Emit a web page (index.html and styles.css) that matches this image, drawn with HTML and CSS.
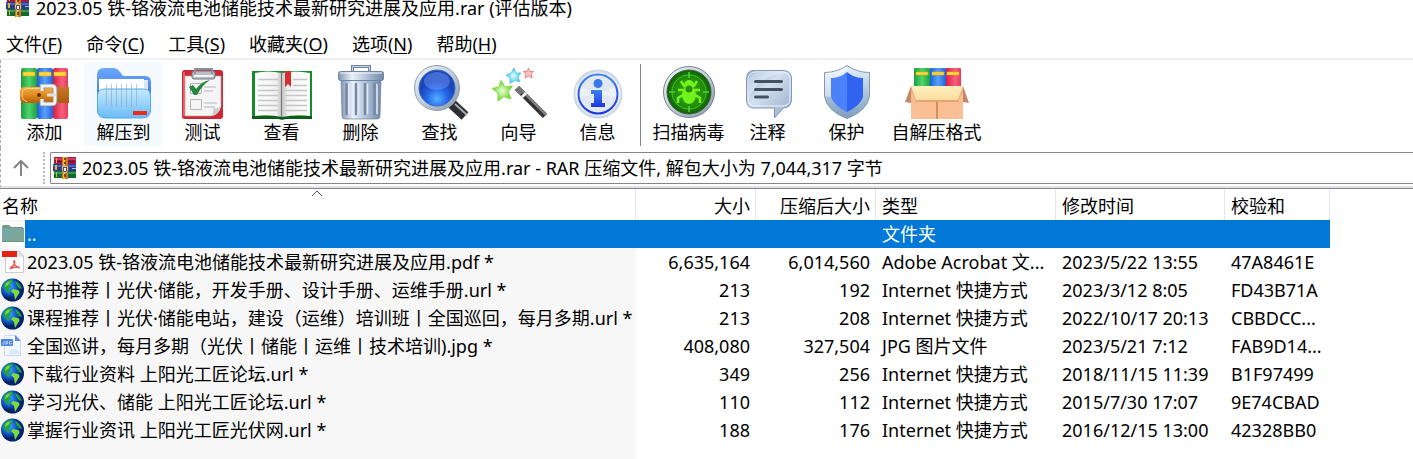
FILE: index.html
```html
<!DOCTYPE html>
<html lang="zh-CN">
<head>
<meta charset="utf-8">
<title>2023.05 铁-铬液流电池储能技术最新研究进展及应用.rar (评估版本)</title>
<link rel="stylesheet" href="styles.css">
</head>
<body>
<svg class="sprite" aria-hidden="true">
  <defs>
    <linearGradient id="gGreen"><stop offset="0" stop-color="#1d9c3e"/><stop offset=".5" stop-color="#4fd46a"/><stop offset="1" stop-color="#1f9f3e"/></linearGradient>
    <linearGradient id="gBlue"><stop offset="0" stop-color="#1c5fd6"/><stop offset=".5" stop-color="#5aa0fb"/><stop offset="1" stop-color="#1f62dc"/></linearGradient>
    <linearGradient id="gRed"><stop offset="0" stop-color="#d81c40"/><stop offset=".6" stop-color="#f8607c"/><stop offset="1" stop-color="#e43a59"/></linearGradient>
    <linearGradient id="gBelt" x2="0" y2="1"><stop offset="0" stop-color="#f7b04a"/><stop offset=".5" stop-color="#e08a1c"/><stop offset="1" stop-color="#b25e0c"/></linearGradient>
    <linearGradient id="gBack" x2="0" y2="1"><stop offset="0" stop-color="#6ba8fb"/><stop offset="1" stop-color="#2358d8"/></linearGradient>
    <linearGradient id="gFront" x2="0" y2="1"><stop offset="0" stop-color="#c4e9fe"/><stop offset="1" stop-color="#6bbcf7"/></linearGradient>
    <linearGradient id="gPage"><stop offset="0" stop-color="#fff"/><stop offset=".8" stop-color="#f1f1f1"/><stop offset="1" stop-color="#b8b8b8"/></linearGradient>
    <linearGradient id="gPageR"><stop offset="0" stop-color="#c2c2c2"/><stop offset=".2" stop-color="#f1f1f1"/><stop offset="1" stop-color="#fff"/></linearGradient>
    <linearGradient id="gBin"><stop offset="0" stop-color="#8296b2"/><stop offset=".3" stop-color="#e9f0f8"/><stop offset=".6" stop-color="#b5c6db"/><stop offset="1" stop-color="#7188a8"/></linearGradient>
    <linearGradient id="gSilver" x2="1" y2="1"><stop offset="0" stop-color="#f4f8fc"/><stop offset=".5" stop-color="#c3cedc"/><stop offset="1" stop-color="#8895a8"/></linearGradient>
    <radialGradient id="gLens" cy=".8"><stop offset="0" stop-color="#4fb0ff"/><stop offset=".6" stop-color="#2563e6"/><stop offset="1" stop-color="#1c45b8"/></radialGradient>
    <linearGradient id="gInfo" x2="0" y2="1"><stop offset="0" stop-color="#3b83f2"/><stop offset="1" stop-color="#1f35dc"/></linearGradient>
    <radialGradient id="gScan"><stop offset="0" stop-color="#3fae16"/><stop offset=".7" stop-color="#208a0a"/><stop offset="1" stop-color="#0d5e05"/></radialGradient>
    <linearGradient id="gBubble" x2="1" y2="1"><stop offset="0" stop-color="#8fa9ca"/><stop offset=".4" stop-color="#d3e0f0"/><stop offset="1" stop-color="#93a9c8"/></linearGradient>
    <linearGradient id="gShield" x2="0" y2="1"><stop offset="0" stop-color="#e5f1fb"/><stop offset="1" stop-color="#7d9cbd"/></linearGradient>
    <linearGradient id="gBox" x2="0" y2="1"><stop offset="0" stop-color="#e79a68"/><stop offset=".3" stop-color="#f8bd90"/><stop offset="1" stop-color="#fcc096"/></linearGradient>
    <linearGradient id="gLid" x2="0" y2="1"><stop offset="0" stop-color="#fff0bb"/><stop offset="1" stop-color="#fbdda0"/></linearGradient>
    <radialGradient id="gSea" cx=".35" cy=".35"><stop offset="0" stop-color="#46a8fa"/><stop offset=".6" stop-color="#1260d2"/><stop offset="1" stop-color="#05246e"/></radialGradient>
    <linearGradient id="gFolder" x2="1" y2="1"><stop offset="0" stop-color="#72a9ad"/><stop offset="1" stop-color="#83a58d"/></linearGradient>
    <radialGradient id="gStar"><stop offset="0" stop-color="#efffdc"/><stop offset="1" stop-color="#69d51f"/></radialGradient>
    <radialGradient id="gStarB"><stop offset="0" stop-color="#e8fbff"/><stop offset="1" stop-color="#3fc6ec"/></radialGradient>
  </defs>

  <symbol id="archive" viewBox="0 0 24 22">
    <path fill="#9f1c45" d="M1 0h22v7H1z"/><path fill="#d63561" d="M1 1h22v2H1z"/>
    <path fill="#283a8f" d="M0 7h23v7H0z"/><path fill="#4b67c8" d="M0 8h23v2H0z"/>
    <path fill="#15692f" d="M1 14h22v7H1z"/><path fill="#2ea052" d="M1 15h22v2H1z"/>
    <path fill="#5b1230" d="M2 4h20v1H2z"/><path fill="#b9c2e8" d="M19 11h4v1h-4z"/>
    <path fill="#e8b32a" d="M3 1h1v5H3zM2 8h2v5H2zM3 15h1v5H3z"/>
    <path fill="#c87a1c" d="M9 0h6v22H9z"/><path fill="#f0b548" d="M10 0h2v22h-2z"/>
    <path fill="#7b4310" d="M11 1h2v2h-2zM11 5h2v2h-2zM11 17h2v3h-2z"/>
    <path fill="#6b4a35" d="M8 9h8v4l-2 3h-4l-2-3z"/><path fill="none" stroke="#c9c4c0" d="M9.500 9.500h5v4l-1 2h-3l-1-2z"/><path fill="#fff" d="M11 11h2v3h-2z"/>
  </symbol>

  <symbol id="i-add" viewBox="0 0 64 56">
    <rect x="8" y="4" width="16" height="51" rx="2" fill="url(#gGreen)"/><rect x="24" y="4" width="16" height="51" rx="2" fill="url(#gBlue)"/><rect x="40" y="4" width="15" height="51" rx="2" fill="url(#gRed)"/>
    <path fill="#ffd93b" stroke="#d9a81b" stroke-width=".6" d="M10 8h12v4H10zM26 8h12v4H26zM41 8h12v4H41z"/>
    <path fill="url(#gBelt)" d="M12 23h44v16H12q-4 0-5-4v-8q1-4 5-4z"/>
    <path fill="#a85a12" opacity=".65" d="M44 23h12v16H44z"/><path stroke="#ffd287" fill="none" d="M14 24.500q-5 1-5 6.500t5 6.500M13 24.500h14"/>
    <circle cx="26" cy="31" r="2" fill="#633607"/>
    <path fill="none" stroke="#8e9299" stroke-width="4.500" d="M29 27v-5h10q3 0 3 3v12q0 3-3 3H29v-5"/><path fill="none" stroke="#f0f2f5" stroke-width="3" d="M29 27v-5h10q3 0 3 3v12q0 3-3 3H29v-5"/>
    <path stroke="#dfe2e7" stroke-width="3" d="M34 31h9"/>
  </symbol>

  <symbol id="i-extract" viewBox="0 0 64 56">
    <path fill="url(#gBack)" d="M5 11q0-7 7-7h9q4 0 7 4l3 4h22q6 0 6 6v26q0 10-9 10H14q-9 0-9-9z"/>
    <path fill="#dbe7f5" d="M9 16h47v26H9z"/><path fill="#fff" d="M7 15h45v26H7z"/>
    <path fill="url(#gFront)" stroke="#52a9ef" d="M5.500 32q0-7 7-7h39q7 0 7 7v13q0 9-9 9H14q-8.500 0-8.500-9z"/>
    <path stroke="#8ca7ba" stroke-width="1" opacity=".6" d="M14.500 21v21M19.500 20v23M24.500 20v23M29.500 20v23M34.500 20v23M39.500 20v23M44.500 20v22"/>
    <path fill="#e92d16" d="M41 47h14v4H41z"/>
  </symbol>

  <symbol id="i-test" viewBox="0 0 64 56">
    <rect x="11" y="6" width="41" height="49" rx="3" fill="#cf2632"/><path fill="#ec5d63" d="M12 8h2v44h-2z"/>
    <path fill="#f5f5f5" stroke="#aaa" stroke-width=".7" d="M14 12h36v30q-2 9-10 10H14z"/><path fill="#cfcfcf" d="M50 42q-2 9-10 10 3-3 2-8 5 1 8-2z"/>
    <rect x="21" y="7" width="23" height="8" rx="2" fill="#b9bec4" stroke="#737a82"/><path fill="none" stroke="#8a9199" stroke-width="2" d="M24 10V5h17v5"/><path fill="#f4f4f4" d="M23 11h19v2H23z"/>
    <path fill="none" stroke="#b5b5b5" d="M19.500 19.500h11v10h-11zM19.500 35.500h11v10h-11z"/>
    <path stroke="#b6b6b6" stroke-width="1.200" d="M33 23h12M33 27h9M33 39h13M33 43h11"/>
    <path fill="#24863d" d="M18 23l4-2 3 4q6-8 14-9-8 5-13 15h-3z"/>
  </symbol>

  <symbol id="i-view" viewBox="0 0 64 56">
    <path fill="#168b2b" d="M2 7h60v48H36l-4 1-4-1H2z"/><path fill="#0d5c1c" d="M2 52h60v3H2z"/>
    <path fill="url(#gPage)" d="M5 9q13-3 27 0v44q-13-3-27-1z"/><path fill="url(#gPageR)" d="M32 9q13-3 28 0v43q-14-2-28 1z"/>
    <path stroke="#c5c5c5" stroke-width="1.300" d="M8 15.500h20M8 21.500h20M8 26.500h20M8 31.500h20M8 36.500h20M8 41.500h20M8 46.500h20M43 15.500h14M43 21.500h14M35 26.500h22M35 31.500h22M35 36.500h22M35 41.500h22M35 46.500h22"/>
    <path stroke="#777" d="M31.500 8v45"/><path fill="#d82b2e" d="M35 7h6v16l-3-3-3 3z"/>
  </symbol>

  <symbol id="i-delete" viewBox="0 0 64 56">
    <path fill="none" stroke="#6f839e" stroke-width="3" d="M23.500 8V2.500h17V8"/><path fill="none" stroke="#c6d4e5" d="M23.500 8V2.500h17V8"/>
    <path fill="url(#gBin)" stroke="#6e819c" stroke-width=".7" d="M12 15h40l-1 37q0 3-3 3H16q-3 0-3-3z"/>
    <path stroke="#7589a4" stroke-width="2.500" stroke-linecap="round" d="M17.500 20v30M27 20v30M36 20v30M45.500 20v30"/><path stroke="#e2ebf5" stroke-width="1.500" d="M20 20v30M29.500 20v30M38.500 20v30M48 20v30"/>
    <rect x="9.500" y="7.500" width="45" height="9" rx="2" fill="url(#gBin)" stroke="#7186a3"/><path stroke="#f2f7fc" stroke-width="1" d="M11 9h42"/>
  </symbol>

  <symbol id="i-find" viewBox="0 0 64 56">
    <path stroke="#b7bdc5" stroke-width="7" d="M41 37l5 5"/><path stroke="#2c2e31" stroke-width="10" d="M44 40l13 12"/><path stroke="#a9adb2" stroke-width="2" d="M47 40l12 11"/>
    <circle cx="29" cy="24" r="22.500" fill="url(#gSilver)" stroke="#8d9bad"/><circle cx="29" cy="24" r="18" fill="url(#gLens)" stroke="#3a6fc2"/>
    <ellipse cx="29" cy="17" rx="13" ry="9" fill="#7fa8ff" opacity=".4"/>
  </symbol>

  <symbol id="i-wizard" viewBox="0 0 64 56">
    <path stroke="#333" stroke-width="6" d="M30 24l28 28"/><path stroke="#858585" stroke-width="2" d="M31 23l28 28"/><path stroke="#777" stroke-width="6" d="M30 24l5 5"/><path stroke="#f4f4f4" stroke-width="6" d="M36 30l2 2"/>
    <path fill="url(#gStar)" stroke="#7bdc3a" d="M14 16.500l4 6.500 7.500-1-4.500 6 3 7-7-2.500-6 4.500V29l-6-4.500 7-1.500z"/>
    <path fill="url(#gStarB)" stroke="#62cdea" d="M27 4l2 5h5l-3 4 2 5-5-1.500-5 3v-5.500l-4-3 5-2z"/>
    <path fill="#ffc0c0" stroke="#ee8585" d="M41.500 4l1.500 3.500h3.500L44 10l1 4-3.500-2L38 14l1-4-3-2.500h4z"/>
  </symbol>

  <symbol id="i-info" viewBox="0 0 64 56">
    <circle cx="32" cy="30" r="24.500" fill="#ccd7e5"/><circle cx="32" cy="30" r="22.500" fill="#e1e8f0"/><path fill="#fff" opacity=".4" d="M32 30L10 20l-1 14zM32 30l22-10 1 14z"/>
    <circle cx="32" cy="30" r="19.500" fill="none" stroke="url(#gInfo)" stroke-width="2"/>
    <circle cx="32" cy="19.500" r="4.500" fill="#3b79e9"/><path fill="url(#gInfo)" d="M25 26h11v13h3v4H25v-4h3v-9h-3z"/>
  </symbol>

  <symbol id="i-scan" viewBox="0 0 64 56">
    <circle cx="32" cy="28" r="25.500" fill="url(#gSilver)" stroke="#748190"/><circle cx="32" cy="28" r="22" fill="url(#gScan)" stroke="#39602f"/>
    <circle cx="32" cy="28" r="17" fill="none" stroke="#47c32a"/><path stroke="#52d330" stroke-width="1.500" d="M32 8v6M32 42v6M12 28h6M46 28h6"/>
    <path fill="none" stroke="#71f31b" stroke-width="2.500" d="M24 17l3 5h10l3-5M21 26h6M37 26h6M21 39v-5l5-3M43 39v-5l-5-3"/>
    <circle cx="32" cy="21" r="5" fill="#71f31b"/><ellipse cx="32" cy="31" rx="7" ry="9" fill="#71f31b"/><circle cx="32" cy="25" r="3.500" fill="#2a8c13"/>
  </symbol>

  <symbol id="i-comment" viewBox="0 0 64 56">
    <path fill="url(#gBubble)" stroke="#7f97b8" d="M18 6.500h29q8.500 0 8.500 8.500v20q0 8.500-8 9L38.500 54V44H18q-7.500 0-7.500-8V15q0-8.500 7.500-8.500z"/>
    <path fill="#fff" opacity=".35" d="M13 34V17q0-8 8-8h27Q22 12 13 34z"/><rect x="12" y="8" width="42" height="34" rx="7" fill="none" stroke="#f0f6fd"/>
    <path stroke="#445064" stroke-width="3" stroke-linecap="round" d="M19.500 17.500h26M19.500 25.500h26M19.500 33h12"/>
  </symbol>

  <symbol id="i-protect" viewBox="0 0 64 56">
    <path fill="url(#gShield)" stroke="#8398af" d="M32 1.500q-10 7-22.500 7v24Q12 47 32 54.500 52 47 54.500 32.500v-24Q42 8.500 32 1.500z"/>
    <path fill="#fff" opacity=".45" d="M32 2q-10 7-22 7v23l6 1V14q8 0 16-5z"/>
    <path fill="#4b81fb" d="M32 8q-7 6-16 6v19q3 9 16 15z"/><path fill="#2f63f0" d="M32 8q7 6 16 6v19q-3 9-16 15z"/>
  </symbol>

  <symbol id="i-sfx" viewBox="0 0 64 56">
    <rect x="9" y="4" width="16" height="22" rx="1" fill="url(#gGreen)"/><rect x="25" y="4" width="16" height="22" rx="1" fill="url(#gBlue)"/><rect x="41" y="4" width="15" height="22" rx="1" fill="url(#gRed)"/>
    <path fill="#ffd93b" stroke="#d9a81b" stroke-width=".6" d="M11 8h12v3H11zM27 8h12v3H27zM42 8h12v3H42z"/>
    <path fill="#c48869" d="M6 22L0 38l6 1zM58 22l6 17-6-1z"/><path fill="url(#gBox)" d="M6 22h52v33H6z"/><path stroke="#d2905f" stroke-width="2" d="M32 37v18"/>
    <path fill="#e8a373" d="M6 23l5 15h42l5-15z"/><path fill="url(#gLid)" d="M6 22h52l-5 14H11z"/>
  </symbol>

  <symbol id="f-folder" viewBox="0 0 25 24">
    <path fill="#fcfcfc" d="M1 0h24v24H1z"/><path fill="#759a78" d="M2 5l1-2h6l2 2h12v4H2z"/><path fill="url(#gFolder)" d="M2 6h22v14H2z"/><path fill="#6c958e" d="M2 19h22v1H2z"/>
  </symbol>
  <symbol id="f-pdf" viewBox="0 0 25 24">
    <path fill="#fff" stroke="#ccc" d="M5.500 1.500H19l4.500 4.500v16.500h-18z"/><path fill="#eee" stroke="#ccc" d="M19 1.500V6h4.500z"/><path fill="#e12413" d="M2 1h15v6H2z"/>
    <path fill="none" stroke="#ed5147" stroke-width="1.300" d="M14 10q-1 6 6 8-5-2-10 1 4-2 5-8M10 19q1-3 4-4"/>
  </symbol>
  <symbol id="f-url" viewBox="0 0 25 24">
    <circle cx="12.500" cy="12" r="11.500" fill="url(#gSea)"/><path fill="#22a63a" d="M4 6q4-5 9-4l-1 3-3 1 2 3-3 2 2 2-1 2q-3-1-4-4L3 10zM15 3q5 2 7 8l-3-1-3-4z"/>
    <path fill="#7ddb3c" d="M13 11l5 1q3 2 0 5l-3 5-1-6-3-3zM6 5l5-2-3 4-3 2z"/>
  </symbol>
  <symbol id="f-jpg" viewBox="0 0 25 24">
    <path fill="#f2f6ff" stroke="#ccdafa" d="M4.500 1.500h12l4 5v15h-16z"/><path fill="#5d8fe6" d="M15 1l6 6h-6z"/><path fill="#dbe6fb" d="M9 20q1-5 5-5t6 5z"/><rect x="1" y="5" width="12" height="7" rx="1" fill="#4c86e2"/><path fill="none" stroke="#b4cdf5" stroke-width="1" d="M4 7v3H2.500M6 11V7.500h1.500v2H6M11.500 7.500H9.500V10h2V9"/>
  </symbol>
</svg>

<header class="titlebar"><svg class="archive"><use href="#archive"/></svg><span>2023.05 铁-铬液流电池储能技术最新研究进展及应用.rar (评估版本)</span></header>

<nav class="menu">
  <button>文件(<u>F</u>)</button><button>命令(<u>C</u>)</button><button>工具(<u>S</u>)</button><button>收藏夹(<u>O</u>)</button><button>选项(<u>N</u>)</button><button>帮助(<u>H</u>)</button>
</nav>

<div class="toolbar">
  <button class="tool"><svg><use href="#i-add"/></svg>添加</button>
  <button class="tool tool-active"><svg><use href="#i-extract"/></svg>解压到</button>
  <button class="tool"><svg><use href="#i-test"/></svg>测试</button>
  <button class="tool"><svg><use href="#i-view"/></svg>查看</button>
  <button class="tool"><svg><use href="#i-delete"/></svg>删除</button>
  <button class="tool"><svg><use href="#i-find"/></svg>查找</button>
  <button class="tool"><svg><use href="#i-wizard"/></svg>向导</button>
  <button class="tool"><svg><use href="#i-info"/></svg>信息</button>
  <span class="separator"></span>
  <button class="tool"><svg><use href="#i-scan"/></svg>扫描病毒</button>
  <button class="tool"><svg><use href="#i-comment"/></svg>注释</button>
  <button class="tool"><svg><use href="#i-protect"/></svg>保护</button>
  <button class="tool tool-wide"><svg><use href="#i-sfx"/></svg>自解压格式</button>
</div>

<div class="location">
  <button class="up" aria-label="向上"><svg viewBox="0 0 18 18"><path d="M9 17V2M2 9l7-7 7 7"/></svg></button>
  <div class="address">
    <svg class="archive"><use href="#archive"/></svg>
    <input aria-label="路径" readonly value="2023.05 铁-铬液流电池储能技术最新研究进展及应用.rar - RAR 压缩文件, 解包大小为 7,044,317 字节">
  </div>
</div>

<main class="list">
  <table>
    <colgroup><col class="c-name"><col class="c-size"><col class="c-size"><col class="c-type"><col class="c-time"><col class="c-sum"></colgroup>
    <thead><tr>
      <th>名称<svg class="sort" viewBox="0 0 12 7"><path d="M1 6l5-5 5 5"/></svg></th><th class="num">大小</th><th class="num">压缩后大小</th><th>类型</th><th>修改时间</th><th>校验和</th>
    </tr></thead>
    <tbody>
      <tr class="selected"><td><div class="name"><svg><use href="#f-folder"/></svg><span>..</span></div></td><td></td><td></td><td>文件夹</td><td></td><td></td></tr>
      <tr><td><div class="name"><svg><use href="#f-pdf"/></svg><span>2023.05 铁-铬液流电池储能技术最新研究进展及应用.pdf *</span></div></td><td class="num">6,635,164</td><td class="num">6,014,560</td><td>Adobe Acrobat 文...</td><td>2023/5/22 13:55</td><td>47A8461E</td></tr>
      <tr><td><div class="name"><svg><use href="#f-url"/></svg><span>好书推荐丨光伏·储能，开发手册、设计手册、运维手册.url *</span></div></td><td class="num">213</td><td class="num">192</td><td>Internet 快捷方式</td><td>2023/3/12 8:05</td><td>FD43B71A</td></tr>
      <tr><td><div class="name"><svg><use href="#f-url"/></svg><span>课程推荐丨光伏·储能电站，建设（运维）培训班丨全国巡回，每月多期.url *</span></div></td><td class="num">213</td><td class="num">208</td><td>Internet 快捷方式</td><td>2022/10/17 20:13</td><td>CBBDCC...</td></tr>
      <tr><td><div class="name"><svg><use href="#f-jpg"/></svg><span>全国巡讲，每月多期（光伏丨储能丨运维丨技术培训).jpg *</span></div></td><td class="num">408,080</td><td class="num">327,504</td><td>JPG 图片文件</td><td>2023/5/21 7:12</td><td>FAB9D14...</td></tr>
      <tr><td><div class="name"><svg><use href="#f-url"/></svg><span>下载行业资料 上阳光工匠论坛.url *</span></div></td><td class="num">349</td><td class="num">256</td><td>Internet 快捷方式</td><td>2018/11/15 11:39</td><td>B1F97499</td></tr>
      <tr><td><div class="name"><svg><use href="#f-url"/></svg><span>学习光伏、储能 上阳光工匠论坛.url *</span></div></td><td class="num">110</td><td class="num">112</td><td>Internet 快捷方式</td><td>2015/7/30 17:07</td><td>9E74CBAD</td></tr>
      <tr><td><div class="name"><svg><use href="#f-url"/></svg><span>掌握行业资讯 上阳光工匠光伏网.url *</span></div></td><td class="num">188</td><td class="num">176</td><td>Internet 快捷方式</td><td>2016/12/15 13:00</td><td>42328BB0</td></tr>
    </tbody>
  </table>
</main>
</body>
</html>
```

FILE: styles.css
```css
:root { --name-width: 636px; }
* { box-sizing: border-box; }
body {
  margin: 0;
  min-height: 100vh;
  display: flex;
  flex-direction: column;
  background: #fff;
  color: #000;
  font: 18px/24px "Noto Sans", "Noto Sans CJK SC", sans-serif;
  overflow: hidden;
}
button, input { font: inherit; color: inherit; border: 0; padding: 0; background: none; }
svg { display: block; flex: none; }
.sprite { position: absolute; width: 0; height: 0; }
.archive { width: 24px; height: 22px; }

.titlebar { display: flex; align-items: center; gap: 6px; height: 32px; margin-top: -8px; padding-left: 6px; white-space: nowrap; }
.titlebar .archive { align-self: flex-start; height: 24px; margin-top: 2px; }

.menu { display: flex; gap: 24px; height: 36px; padding: 8px 6px 0; border-bottom: 2px solid #f0f0f0; }
.menu button { height: 24px; white-space: nowrap; }
.menu u { text-underline-offset: 2px; text-decoration-thickness: 1px; }

.toolbar { display: flex; padding: 2px 0 2px 4px; border-left: 1px dashed #aaa; }
.tool { display: flex; flex-direction: column; align-items: center; width: 79px; height: 84px; border-radius: 2px; white-space: nowrap; }
.tool svg { width: 64px; height: 56px; margin-top: 2px; }
.tool-active { background: #f5faff; }
.tool-wide { width: 101px; }
.separator { width: 1px; margin: 2px 8px 0 3px; background: #868686; }

.location { display: flex; height: 40px; padding: 4px 0 2px; border-left: 1px dashed #aaa; border-bottom: 2px solid #e4e4e4; }
.up { width: 44px; padding-left: 11px; border-right: 2px dotted #bbb; }
.up svg { width: 18px; height: 18px; fill: none; stroke: #858585; stroke-width: 2; }
.address { flex: 1; display: flex; align-items: center; gap: 5px; margin-left: 5px; padding-left: 2px; border: 1px solid #868686; border-right: 0; border-radius: 2px 0 0 2px; }
.address input { flex: 1; min-width: 0; height: 24px; outline: 0; }

.list { flex: 1; border-top: 1px solid #828790; background: linear-gradient(#f7f7f7, #f7f7f7) 0 0 / var(--name-width) 100% no-repeat; }
.list table { width: 1330px; table-layout: fixed; border-collapse: separate; border-spacing: 0; }
.c-name { width: var(--name-width); }
.c-size { width: 120px; }
.c-type { width: 180px; }
.c-time { width: 169px; }
.c-sum { width: 105px; }
th { position: relative; height: 31px; padding: 2px 5px 0 6px; background: #fff; border-right: 1px solid #e5e5e5; font-weight: 400; text-align: left; }
th:first-child { padding-left: 2px; }
td { height: 28px; padding: 0 5px 0 6px; white-space: nowrap; }
td:first-child { padding: 0; }
.num { text-align: right; padding-right: 6px; }
th.num { padding-right: 5px; }
.sort { position: absolute; left: 50%; top: 1px; width: 12px; height: 7px; margin-left: -7px; fill: none; stroke: #555; }
.name { display: flex; align-items: center; height: 28px; }
.name svg { width: 25px; height: 24px; }
.name span { flex: 1; line-height: 28px; padding-left: 2px; }
.selected td:not(:first-child), .selected span { background: #0078d7; color: #fff; }
```
